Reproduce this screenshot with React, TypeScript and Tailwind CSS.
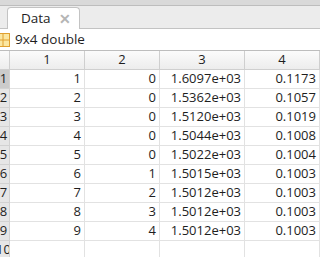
import React from "react";

const rows: [string, string, string, string][] = [
  ["1", "0", "1.6097e+03", "0.1173"],
  ["2", "0", "1.5362e+03", "0.1057"],
  ["3", "0", "1.5120e+03", "0.1019"],
  ["4", "0", "1.5044e+03", "0.1008"],
  ["5", "0", "1.5022e+03", "0.1004"],
  ["6", "1", "1.5015e+03", "0.1003"],
  ["7", "2", "1.5012e+03", "0.1003"],
  ["8", "3", "1.5012e+03", "0.1003"],
  ["9", "4", "1.5012e+03", "0.1003"],
];

const widths = ["w-[75px]", "w-[75px]", "w-[85px]", "w-[75px]"];

function RowLabel({ n, selected }: { n: string; selected?: boolean }) {
  return (
    <div
      className={
        "w-[10px] shrink-0 overflow-hidden border-r border-b border-[#d2d2d2] " +
        (selected ? "bg-[#cbcbcb]" : "bg-[#e6e6e6]")
      }
    >
      <div className="ml-[-3px] w-[13px] h-full flex justify-center items-center">
        <span>{n}</span>
      </div>
    </div>
  );
}

export default function App() {
  return (
    <div
      className="w-[320px] h-[257px] overflow-hidden bg-white text-[#1e1e1e] flex flex-col"
      style={{ fontFamily: '"Open Sans", "Noto Sans", sans-serif' }}
    >
      {/* top strip */}
      <div className="h-[6px] shrink-0 bg-[#d9d9d9] border-b border-[#bdbdbd]" />
      {/* tab row */}
      <div className="h-[23px] shrink-0 bg-[#ececec] border-b border-[#c3c3c3] flex items-end">
        <div className="ml-[7px] w-[73px] h-[22px] mb-[-1px] bg-white border border-b-0 border-[#c3c3c3] rounded-t-[4px] flex items-center pl-[13px] pr-[8px]">
          <span className="text-[13.5px] leading-none">Data</span>
          <span className="ml-auto text-[#b5b5b5] text-[14px] leading-none font-bold">✕</span>
        </div>
      </div>
      {/* label row */}
      <div className="h-[21px] shrink-0 flex items-center">
        <svg width="10" height="14" viewBox="0 0 10 14" className="shrink-0">
          <rect x="-4" y="0.5" width="13.5" height="13" fill="#fbe7a1" stroke="#e0a030" />
          <line x1="-4" y1="7" x2="10" y2="7" stroke="#e0a030" />
          <line x1="3" y1="0" x2="3" y2="14" stroke="#e0a030" />
        </svg>
        <span className="ml-[5px] text-[13.5px] leading-none">9x4 double</span>
      </div>
      {/* header row */}
      <div className="h-[20px] shrink-0 flex border-t border-[#bdbdbd] bg-gradient-to-b from-[#fbfbfb] to-[#ececec] text-[13px]">
        <div className="w-[10px] shrink-0 border-r border-b border-[#cfcfcf]" />
        {["1", "2", "3", "4"].map((h, i) => (
          <div
            key={h}
            className={widths[i] + " shrink-0 border-r border-b border-[#cfcfcf] flex items-center justify-center"}
          >
            {h}
          </div>
        ))}
      </div>
      {/* data rows */}
      {rows.map((r, ri) => (
        <div key={ri} className="h-[19px] shrink-0 flex text-[13px]">
          <RowLabel n={String(ri + 1)} selected={ri === 0} />
          {r.map((c, ci) => (
            <div
              key={ci}
              className={widths[ci] + " shrink-0 border-r border-b border-[#e2e2e2] flex items-center justify-end pr-[3px]"}
            >
              {c}
            </div>
          ))}
        </div>
      ))}
      <div className="h-[19px] shrink-0 flex text-[13px]">
        <RowLabel n="10" />
        {widths.map((w, ci) => (
          <div key={ci} className={w + " shrink-0 border-r border-b border-[#e2e2e2]"} />
        ))}
      </div>
    </div>
  );
}
